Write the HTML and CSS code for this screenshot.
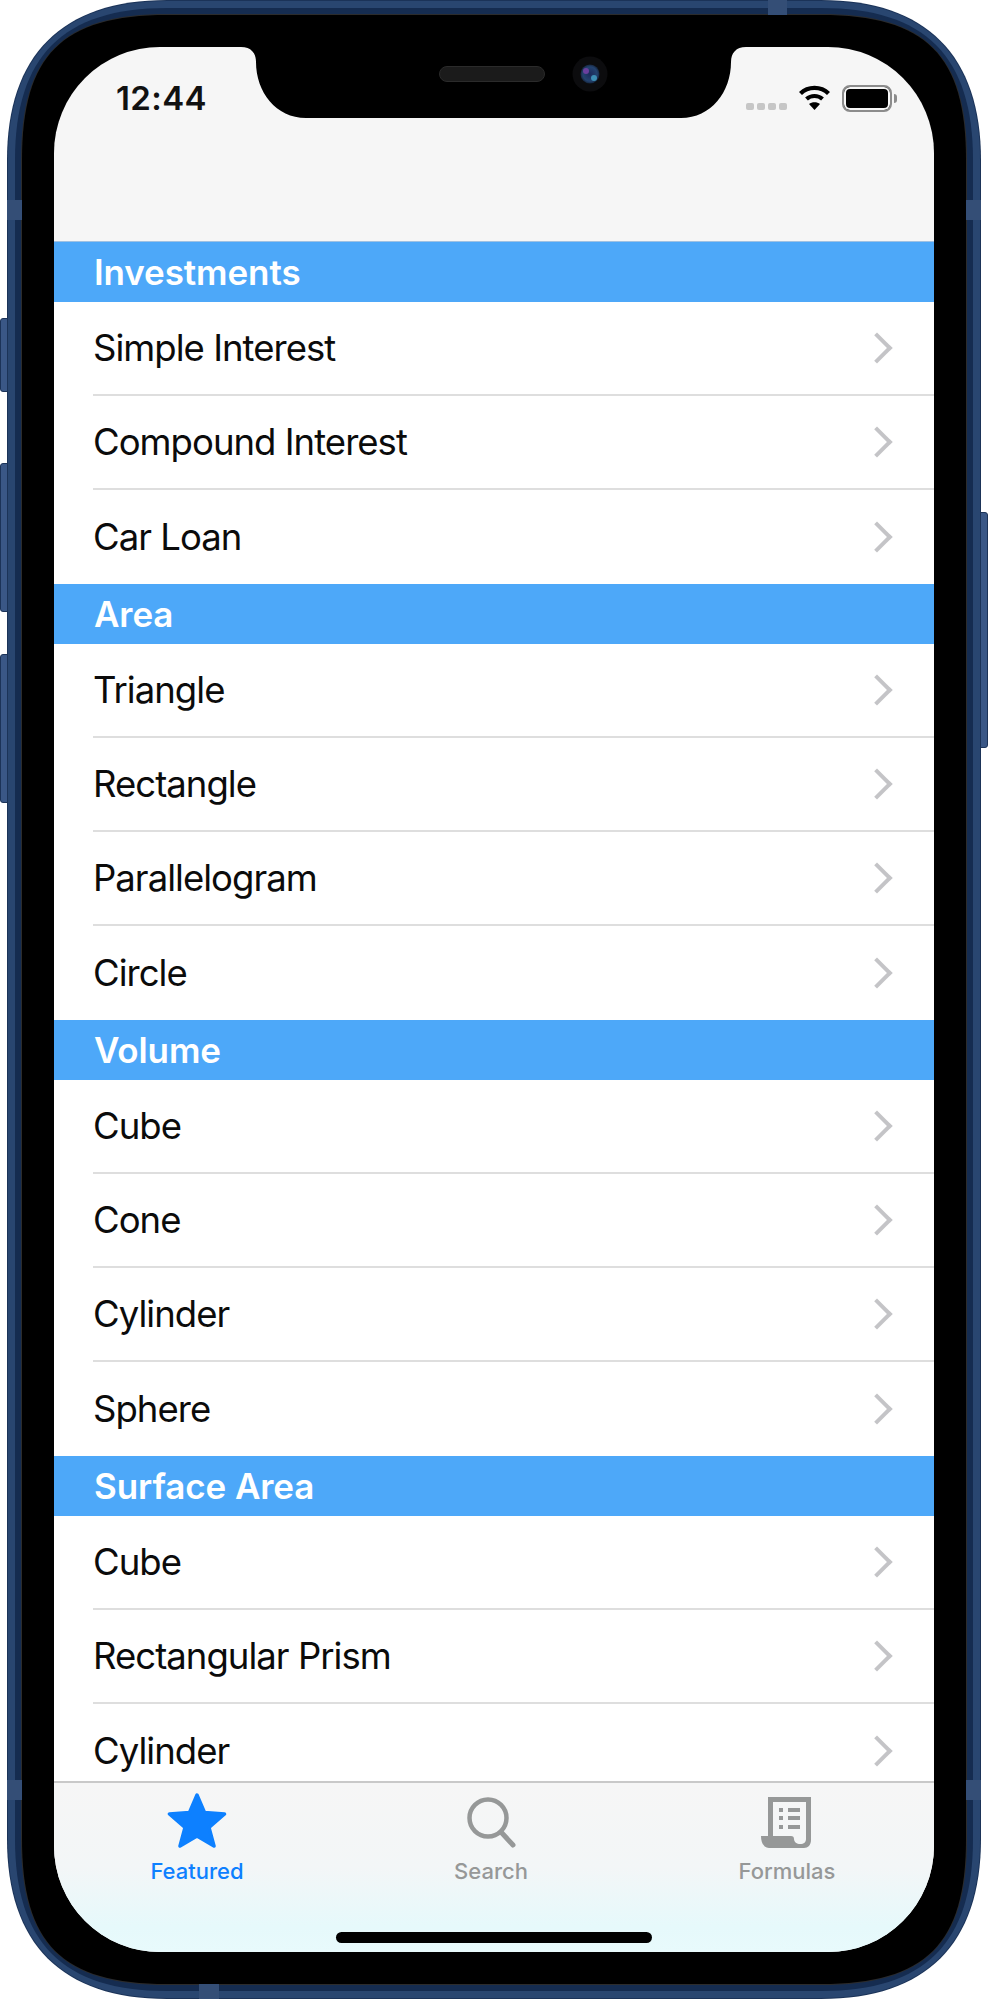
FILE: index.html
```html
<!DOCTYPE html>
<html lang="en">
<head>
    <meta charset="UTF-8">
    <meta name="viewport" content="width=device-width, initial-scale=1.0">
    <title>Formulas</title>
    <link rel="stylesheet" href="styles.css">
</head>
<body>
    <div class="device">
        <span class="side-btn mute"></span>
        <span class="side-btn vol-up"></span>
        <span class="side-btn vol-down"></span>
        <span class="side-btn power"></span>

        <!-- shell: nested squircles, outermost first -->
        <svg class="shell" width="988" height="2000" viewBox="0 0 988 2000">
            <path fill="#1b3358" d="M167 0H821C926 0 981 55 981 160V1839C981 1944 926 1999 821 1999H167C62 1999 7 1944 7 1839V160C7 55 62 0 167 0Z"/>
            <path fill="#294670" d="M167 1H821C925.5 1 980 55.5 980 160V1839C980 1943.5 925.5 1998 821 1998H167C62.5 1998 8 1943.5 8 1839V160C8 55.5 62.5 1 167 1Z"/>
            <path fill="#152c50" d="M167 8H821C925 8 973 56 973 160V1839C973 1943 925 1991 821 1991H167C63 1991 15 1943 15 1839V160C15 56 63 8 167 8Z"/>
            <path fill="#2c2c2c" d="M167 14H821C926 14 967 55 967 160V1839C967 1944 926 1985 821 1985H167C62 1985 21 1944 21 1839V160C21 55 62 14 167 14Z"/>
            <path fill="#000" d="M167 15H821C926 15 966 55 966 160V1839C966 1944 926 1984 821 1984H167C62 1984 22 1944 22 1839V160C22 55 62 15 167 15Z"/>
        </svg>
        <span class="band band-top"></span>
        <span class="band band-bottom"></span>
        <span class="band band-l1"></span>
        <span class="band band-l2"></span>
        <span class="band band-r1"></span>
        <span class="band band-r2"></span>

        <div class="frame">
            <div class="screen">
                <svg class="notch" width="880" height="71" viewBox="0 0 880 71">
                    <defs>
                        <radialGradient id="lens" cx="0.5" cy="0.5" r="0.5">
                            <stop offset="0" stop-color="#1b2a5c"/>
                            <stop offset="0.75" stop-color="#23426e"/>
                            <stop offset="1" stop-color="#16263f"/>
                        </radialGradient>
                    </defs>
                    <path d="M187 0C197 0 202 6 202 15C202 45 222 71 252 71H627C657 71 677 45 677 15C677 6 682 0 692 0Z" fill="#000"/>
                    <rect x="385.5" y="19.5" width="105" height="15" rx="7.5" fill="#1b1b1b" stroke="#2b2b2b"/>
                    <circle cx="536" cy="27" r="17.5" fill="#0c0c0e"/>
                    <circle cx="536" cy="27" r="9.5" fill="url(#lens)"/>
                    <circle cx="532" cy="24" r="3" fill="#6a3f9e"/>
                    <circle cx="540" cy="31" r="3" fill="#3d8fb5"/>
                </svg>

                <div class="nav">
                    <div class="status">
                        <span class="time">12:44</span>
                        <div class="status-icons">
                            <div class="signal"><i></i><i></i><i></i><i></i></div>
                            <svg class="wifi" width="33" height="25" viewBox="0 0 33 25">
                                <path d="M2.5 8.5C10 1 23 1 30.5 8.5" fill="none" stroke="#000" stroke-width="4.2"/>
                                <path d="M8.5 14C13 10 20 10 24.5 14" fill="none" stroke="#000" stroke-width="4.2"/>
                                <path d="M16.5 25L11 19C14 16.5 19 16.5 22 19Z" fill="#000"/>
                            </svg>
                            <div class="battery"></div>
                        </div>
                    </div>
                </div>

                <div class="list">
                    <h3 class="section">Investments</h3>
                    <div class="group">
                        <div class="row">Simple Interest</div>
                        <div class="row">Compound Interest</div>
                        <div class="row">Car Loan</div>
                    </div>
                    <h3 class="section">Area</h3>
                    <div class="group">
                        <div class="row">Triangle</div>
                        <div class="row">Rectangle</div>
                        <div class="row">Parallelogram</div>
                        <div class="row">Circle</div>
                    </div>
                    <h3 class="section">Volume</h3>
                    <div class="group">
                        <div class="row">Cube</div>
                        <div class="row">Cone</div>
                        <div class="row">Cylinder</div>
                        <div class="row">Sphere</div>
                    </div>
                    <h3 class="section">Surface Area</h3>
                    <div class="group">
                        <div class="row">Cube</div>
                        <div class="row">Rectangular Prism</div>
                        <div class="row">Cylinder</div>
                    </div>
                </div>

                <div class="tabbar">
                    <div class="tabs">
                        <div class="tab active">
                            <svg width="60" height="56" viewBox="0 0 60 56">
                                <path d="M30 2L37.5 19.5L57.5 21L42 34.5L47 53L30 43L13 53L18 34.5L2.5 21L22.5 19.5Z" fill="#0d80ff" stroke="#0d80ff" stroke-width="3.5" stroke-linejoin="round"/>
                            </svg>
                            <span>Featured</span>
                        </div>
                        <div class="tab">
                            <svg width="60" height="56" viewBox="0 0 60 56">
                                <circle cx="27" cy="25" r="18.5" fill="none" stroke="#969898" stroke-width="4.5"/>
                                <path d="M40 39L52 52" fill="none" stroke="#969898" stroke-width="5" stroke-linecap="round"/>
                            </svg>
                            <span>Search</span>
                        </div>
                        <div class="tab">
                            <svg width="60" height="56" viewBox="0 0 60 56">
                                <path fill-rule="evenodd" fill="#969898" d="M11 4H54V47C54 52 51 55 47 55H12C7 55 4 50 4 43H11ZM16 9V43H34C36 43 37 44 37 46C37 49 40 51 43 51C47 51 49 49 49 46V9ZM22 15H26V19H22ZM31 15H43V19H31ZM22 23H26V27H22ZM31 23H43V27H31ZM22 32H26V36H22ZM31 32H43V36H31Z"/>
                            </svg>
                            <span>Formulas</span>
                        </div>
                    </div>
                    <div class="home-bar"></div>
                </div>
            </div>
        </div>
    </div>
</body>
</html>
```

FILE: styles.css
```css
* {
    box-sizing: border-box;
}
body {
    margin: 0;
    background-color: #fff;
    font-family: Inter, "Liberation Sans", sans-serif;
}
.device {
    position: relative;
    width: 988px;
    height: 2000px;
    overflow: hidden;
}

/* phone shell */
.shell {
    position: absolute;
    top: 0;
    left: 0;
}
.frame {
    height: 2000px;
    padding: 47px 54px 48px;
}
.screen {
    position: relative;
    display: flex;
    flex-direction: column;
    height: 100%;
    overflow: hidden;
    border-radius: 106px;
    background-color: #f6f6f6;
}
.notch {
    position: absolute;
    top: 0;
    left: 0;
    z-index: 2;
}
.side-btn {
    position: absolute;
    width: 8px;
    border: 1px solid #1c3358;
    border-radius: 3px 0 0 3px;
    background-color: #3a5786;
}
.mute {
    left: 0;
    top: 318px;
    height: 74px;
}
.vol-up {
    left: 0;
    top: 463px;
    height: 149px;
}
.vol-down {
    left: 0;
    top: 654px;
    height: 149px;
}
.power {
    right: 0;
    top: 512px;
    height: 236px;
    border-radius: 0 3px 3px 0;
}
.band {
    position: absolute;
    background-color: #344e76;
}
.band-top {
    left: 768px;
    top: 0;
    width: 19px;
    height: 15px;
}
.band-bottom {
    left: 199px;
    top: 1984px;
    width: 20px;
    height: 15px;
}
.band-l1, .band-l2, .band-r1, .band-r2 {
    width: 15px;
    height: 20px;
}
.band-l1 {
    left: 7px;
    top: 200px;
}
.band-l2 {
    left: 7px;
    top: 1780px;
}
.band-r1 {
    left: 966px;
    top: 200px;
}
.band-r2 {
    left: 966px;
    top: 1780px;
}

/* status bar */
.nav {
    flex: none;
    height: 195px;
    border-bottom: 1px solid #9fc1e2;
}
.status {
    display: flex;
    justify-content: space-between;
    align-items: center;
    padding: 31px 42px 0 62px;
}
.time {
    font-size: 33px;
    line-height: 40px;
    font-weight: 600;
    letter-spacing: 0.4px;
    color: #111;
}
.status-icons {
    display: flex;
    align-items: flex-end;
    gap: 11px;
}
.signal {
    display: flex;
    gap: 3px;
    margin-bottom: 2px;
}
.signal i {
    width: 8px;
    height: 7px;
    border-radius: 2px;
    background-color: #c6c6c6;
}
.wifi {
    display: block;
    margin-bottom: 2px;
}
.battery {
    position: relative;
    width: 50px;
    height: 27px;
    border: 2px solid #8c8c8c;
    border-radius: 8px;
    background-color: #000;
    box-shadow: inset 0 0 0 2px #f6f6f6;
}
.battery::after {
    content: "";
    position: absolute;
    right: -7px;
    top: 7px;
    width: 3px;
    height: 9px;
    border-radius: 0 3px 3px 0;
    background-color: #8c8c8c;
}

/* list */
.list {
    flex: 1;
    min-height: 0;
    overflow: hidden;
    background-color: #fff;
}
.section {
    height: 60px;
    margin: 0;
    padding-left: 40px;
    font-size: 35px;
    line-height: 60px;
    font-weight: 600;
    letter-spacing: -0.1px;
    color: #fff;
    background-color: #4da8f9;
}
.row {
    display: flex;
    justify-content: space-between;
    align-items: center;
    height: 94px;
    margin-left: 39px;
    padding: 0 46px 0 0;
    font-size: 36.5px;
    letter-spacing: -0.97px;
    color: #0b0b0b;
    border-bottom: 2px solid #dedede;
}
.row:last-child {
    border-bottom: none;
}
.row::after {
    content: "";
    width: 18px;
    height: 18px;
    border-top: 4px solid #c4c4c7;
    border-right: 4px solid #c4c4c7;
    transform: rotate(45deg);
}

/* tab bar */
.tabbar {
    flex: none;
    height: 171px;
    padding-top: 10px;
    border-top: 2px solid #c9c9c9;
    background: linear-gradient(#f6f6f6 0%, #f3f6f7 50%, #e6f9fb 85%, #e8fafc 100%);
}
.tabs {
    display: grid;
    grid-template-columns: 286px 302px 290px;
}
.tab {
    display: flex;
    flex-direction: column;
    align-items: center;
    gap: 10px;
    font-size: 22px;
    line-height: 24px;
    font-weight: 500;
    color: #969898;
}
.tab svg {
    display: block;
}
.tab.active {
    color: #0d80ff;
}
.home-bar {
    width: 316px;
    height: 11px;
    margin: 49px auto 0;
    border-radius: 6px;
    background-color: #000;
}
```
